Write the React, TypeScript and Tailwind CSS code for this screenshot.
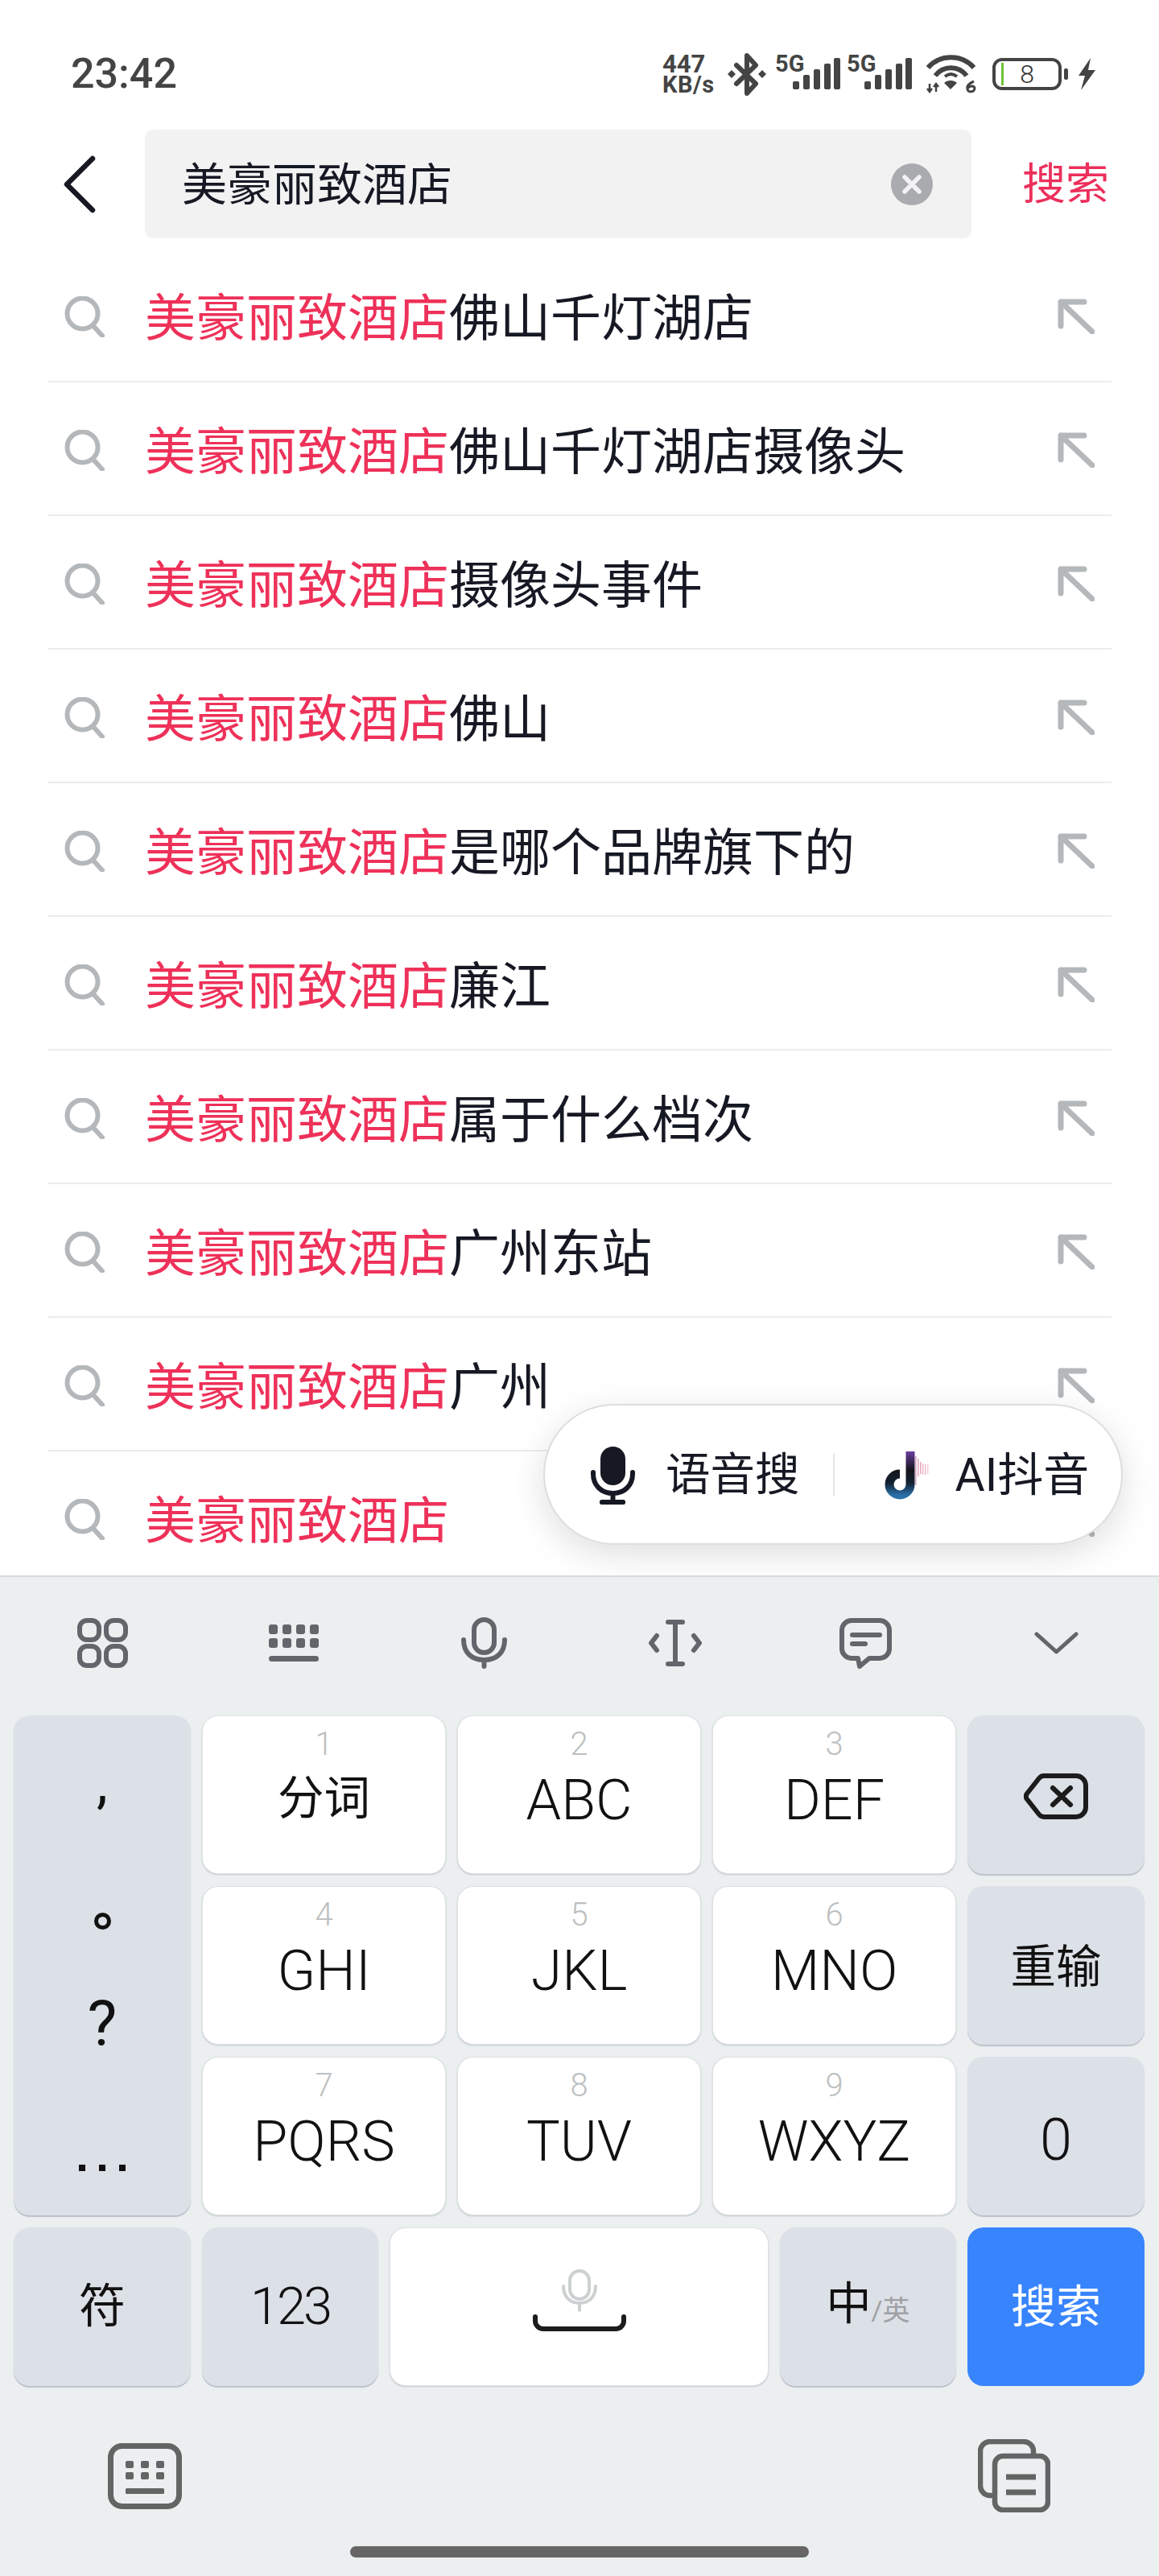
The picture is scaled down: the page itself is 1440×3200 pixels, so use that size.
import React from "react";

const rows = ["佛山千灯湖店", "佛山千灯湖店摄像头", "摄像头事件", "佛山", "是哪个品牌旗下的", "廉江", "属于什么档次", "广州东站", "广州", ""];

function SearchIcon() {
  return (
    <svg className="mt-[4px]" width="50" height="51" viewBox="0 0 50 51" fill="none" stroke="#b5b8ba" strokeWidth="6" strokeLinecap="round">
      <circle cx="22.5" cy="21.5" r="19" />
      <path d="M37 38 L47 49" />
    </svg>
  );
}

function ArrowIcon() {
  return (
    <svg width="46" height="44" viewBox="0 0 46 44" fill="none" stroke="#b5b8ba" strokeWidth="7" strokeLinecap="round" strokeLinejoin="round">
      <path d="M33 4 H4 V34 M4 4 L43 41" />
    </svg>
  );
}

function Signal() {
  return (
    <div className="relative w-[81px] h-[43px] mt-[-6px]">
      <span className="absolute left-0 top-[-5px] text-[29px] leading-[32px] font-bold text-[#444]">5G</span>
      <svg className="absolute left-[22px] top-[4px]" width="59" height="39" viewBox="0 0 59 39" fill="#444">
        <rect x="0" y="29" width="8" height="10" rx="2" />
        <rect x="13" y="21" width="8" height="18" rx="2" />
        <rect x="26" y="14" width="8" height="25" rx="2" />
        <rect x="39" y="7" width="8" height="32" rx="2" />
        <rect x="51" y="0" width="8" height="39" rx="2" />
      </svg>
    </div>
  );
}

function StatusBar() {
  return (
    <div className="flex items-center h-[161px] pt-[23px] pl-[88px] pr-[78px]">
      <span className="text-[52px] leading-[52px] font-medium text-[#444]">23:42</span>
      <div className="ml-auto flex items-center text-[#444]">
        <div className="w-[67px] flex flex-col font-bold">
          <span className="text-[31px] leading-[26px]">447</span>
          <span className="text-[29px] leading-[25px] tracking-[0.5px]">KB/s</span>
        </div>
        <svg className="ml-[14px]" width="48" height="53" viewBox="0 0 48 53" fill="none" stroke="#444" strokeWidth="6" strokeLinejoin="round" strokeLinecap="round">
          <path d="M11 15 L35 38 L24 50 V3 L35 15 L11 38" />
          <path d="M0 26 L5 21 L10 26 L5 31 Z M38 26 L43 21 L48 26 L43 31 Z" fill="#444" stroke="none" />
        </svg>
        <div className="ml-[11px]"><Signal /></div>
        <div className="ml-[8px]"><Signal /></div>
        <svg className="ml-[17px]" width="63" height="48" viewBox="0 0 63 48" fill="none" stroke="#444" strokeWidth="6">
          <path d="M3 16 C18 -1 45 -1 60 16" />
          <path d="M12 26 C22 13 41 13 51 26" />
          <path d="M24 27 C29 23 34 23 39 27" strokeWidth="4" />
          <path d="M5 36 V46 M2 42 L5 46 L8 42 M13 46 V36 M10 40 L13 36 L16 40" strokeWidth="2.5" />
          <path d="M31 43 L23 35 C27 31 35 31 39 35 Z" fill="#444" stroke="none" />
          <path d="M60 33 C53 36 51 40 52 43 C53 47 60 47 61 42 C61 38 55 38 52 42" strokeWidth="3" />
        </svg>
        <div className="ml-[20px] flex items-center">
          <div className="relative w-[86px] h-[40px] rounded-[12px] border-[4px] border-[#444] flex items-center justify-center">
            <span className="absolute left-[7px] top-[2px] w-[3px] h-[28px] bg-[#6fc23a]" />
            <span className="text-[32px] leading-none font-light text-[#333]">8</span>
          </div>
          <span className="ml-[3px] w-[5px] h-[14px] rounded-[2px] bg-[#444]" />
        </div>
        <svg className="ml-[10px]" width="25" height="40" viewBox="0 0 25 40" fill="#444">
          <path d="M18 0 L3 22 L11 22 L6 40 L24 15 L15 15 Z" />
        </svg>
      </div>
    </div>
  );
}

function Header() {
  return (
    <div className="flex items-center h-[135px]">
      <div className="w-[180px] pl-[79px] shrink-0">
        <svg width="40" height="72" viewBox="0 0 40 72" fill="none" stroke="#161823" strokeWidth="6.5" strokeLinecap="round" strokeLinejoin="round">
          <path d="M36 4 L4 36 L36 68" />
        </svg>
      </div>
      <div className="flex items-center w-[1027px] h-[135px] rounded-[10px] bg-[#f2f2f3] pl-[46px] pr-[48px]">
        <span className="pt-[3px] text-[56px] leading-none text-[#161823]">美豪丽致酒店</span>
        <svg className="ml-auto" width="52" height="52" viewBox="0 0 52 52">
          <circle cx="26" cy="26" r="26" fill="#a9abae" />
          <path d="M17 17 L35 35 M35 17 L17 35" stroke="#f2f2f3" strokeWidth="5.5" strokeLinecap="round" />
        </svg>
      </div>
      <span className="ml-[63px] pt-[3px] text-[54px] leading-none text-[#ec2f5b]">搜索</span>
    </div>
  );
}

function DouyinLogo() {
  return (
    <svg className="block" width="57" height="60" viewBox="0 0 57 60" fill="none">
      <defs>
        <linearGradient id="dy" x1="0" y1="0" x2="0" y2="1">
          <stop offset="0" stopColor="#6c3fa3" />
          <stop offset="0.42" stopColor="#15151c" />
          <stop offset="0.72" stopColor="#12202f" />
          <stop offset="1" stopColor="#2a6fa8" />
        </linearGradient>
      </defs>
      <path d="M34 0 V41 A13 13 0 1 1 21 28" stroke="url(#dy)" strokeWidth="11" />
      <rect x="40" y="6" width="1.5" height="36" fill="#b06a9c" opacity="0.6" />
      <rect x="43" y="9" width="1.5" height="22" fill="#d1567f" opacity="0.55" />
      <rect x="46" y="13" width="1.5" height="15" fill="#d1567f" opacity="0.55" />
      <rect x="49" y="15" width="1.5" height="14" fill="#d1567f" opacity="0.45" />
      <rect x="52" y="16" width="1.5" height="13" fill="#d1567f" opacity="0.4" />
      <rect x="55" y="16" width="1.5" height="12" fill="#d1567f" opacity="0.3" />
    </svg>
  );
}

function VoicePill() {
  return (
    <div className="absolute left-[675px] top-[1448px] w-[720px] h-[175px] rounded-full bg-white border-2 border-[#dedede] shadow-[0_12px_44px_rgba(0,0,0,0.13)] flex items-center pl-[57px] pt-[2px] text-[#161823]">
      <svg width="55" height="72" viewBox="0 0 55 72" fill="none">
        <rect x="12" y="0" width="31" height="48" rx="15.5" fill="#161823" />
        <path d="M3 32 V34 C3 48 13 58 27.5 58 C42 58 52 48 52 34 V32" stroke="#161823" strokeWidth="6" strokeLinecap="round" />
        <path d="M27.5 58 V68" stroke="#161823" strokeWidth="6" />
        <rect x="11" y="66" width="32" height="6" rx="2.5" fill="#161823" />
      </svg>
      <span className="ml-[38px] text-[55.5px] leading-none">语音搜</span>
      <span className="ml-[41px] w-[2px] h-[53px] bg-[#e6e6e6]" />
      <span className="ml-[60px]"><DouyinLogo /></span>
      <span className="ml-[33px] text-[57px] leading-none">AI抖音</span>
    </div>
  );
}

function SuggestionList() {
  return (
    <div className="relative flex-1 overflow-hidden">
      <div className="flex flex-col pt-[13px]">
        {rows.map((r, i) => (
          <div key={i} className="flex items-center shrink-0 h-[166px] mx-[59px] border-b-2 border-[#ececec] pl-[21px] pr-[21px]">
            <SearchIcon />
            <span className="ml-[50px] pt-[8px] text-[63px] leading-none whitespace-nowrap">
              <span className="text-[#ee3159]">美豪丽致酒店</span>
              <span className="text-[#161823]">{r}</span>
            </span>
            <span className="ml-auto mt-[4px]"><ArrowIcon /></span>
          </div>
        ))}
      </div>
      <VoicePill />
    </div>
  );
}

const tbStroke = { fill: "none", stroke: "#62666b", strokeWidth: 6, strokeLinecap: "round" as const, strokeLinejoin: "round" as const };

function Toolbar() {
  return (
    <div className="grid grid-cols-6 h-[172px] px-[9px] pb-[8px] items-center justify-items-center">
      <svg width="63" height="62" viewBox="0 0 63 62" {...tbStroke}>
        <rect x="3" y="3" width="24" height="24" rx="9" />
        <rect x="36" y="3" width="24" height="24" rx="9" />
        <rect x="3" y="35" width="24" height="24" rx="9" />
        <rect x="36" y="35" width="24" height="24" rx="9" />
      </svg>
      <svg width="62" height="47" viewBox="0 0 62 47" fill="#62666b">
        {[0, 17, 34, 51].map((x) => (
          <React.Fragment key={x}>
            <rect x={x} y="0" width="11" height="12" rx="3" />
            <rect x={x} y="17" width="11" height="12" rx="3" />
          </React.Fragment>
        ))}
        <rect x="0" y="39" width="62" height="7" rx="3.5" />
      </svg>
      <svg width="57" height="64" viewBox="0 0 57 64" {...tbStroke}>
        <rect x="16" y="3" width="25" height="41" rx="12.5" />
        <path d="M3 28 C3 44 13 53 28.5 53 C44 53 54 44 54 28 M28.5 53 V61" />
      </svg>
      <svg width="66" height="58" viewBox="0 0 66 58" {...tbStroke}>
        <path d="M24 3 H42 M24 55 H42 M33 3 V55" />
        <path d="M10 20 L3 29 L10 38 M56 20 L63 29 L56 38" />
      </svg>
      <svg width="65" height="63" viewBox="0 0 65 63" {...tbStroke}>
        <path d="M15 3 H50 A12 12 0 0 1 62 15 V38 A12 12 0 0 1 50 50 H37 L25 60 L23 50 H15 A12 12 0 0 1 3 38 V15 A12 12 0 0 1 15 3 Z" />
        <path d="M16 21 H50 M16 32 H32" />
      </svg>
      <svg width="55" height="28" viewBox="0 0 55 28" fill="none" stroke="#62666b" strokeWidth="5" strokeLinecap="round" strokeLinejoin="round">
        <path d="M3 3 L27.5 25 L52 3" />
      </svg>
    </div>
  );
}

const lightKey = "bg-white rounded-[20px] border border-[#dfe2e4] shadow-[0_1px_2px_rgba(120,125,135,0.35)]";
const grayKey = "bg-[#dce0e7] rounded-[20px] shadow-[0_2px_1px_#bcc1cc]";

function NumKey({ n, label, cjk }: { n: string; label: string; cjk?: boolean }) {
  return (
    <div className={`${lightKey} h-[197px] flex flex-col items-center pt-[15px] text-[#111]`}>
      <span className="text-[40px] leading-[40px] font-light text-[#bdbfc0]">{n}</span>
      {cjk ? (
        <span className="mt-[13px] text-[57.5px] leading-[70px]">{label}</span>
      ) : (
        <span className="mt-[14px] text-[70px] leading-[70px] font-[350]">{label}</span>
      )}
    </div>
  );
}

function Keys() {
  const keys = [
    ["1", "分词", true], ["2", "ABC"], ["3", "DEF"],
    ["4", "GHI"], ["5", "JKL"], ["6", "MNO"],
    ["7", "PQRS"], ["8", "TUV"], ["9", "WXYZ"],
  ] as [string, string, boolean?][];
  return (
    <div className="flex flex-col gap-[15px] pl-[17px] pr-[18px] text-[#111]">
      <div className="flex gap-[14px]">
        <div className={`${grayKey} w-[220px] h-[621px] shrink-0 flex flex-col items-center`}>
          <span className="mt-[60px] h-[60px] text-[70px] leading-[60px] -translate-y-[6px]">,</span>
          <span className="mt-[125px] w-[21px] h-[21px] rounded-full border-[5px] border-[#111]" aria-label="。" />
          <span className="mt-[88px] h-[60px] text-[78px] leading-[60px]">?</span>
          <span className="mt-[144px] h-[10px] flex gap-[17px]">
            <span className="w-[8px] h-[8px] bg-[#111]" />
            <span className="w-[8px] h-[8px] bg-[#111]" />
            <span className="w-[8px] h-[8px] bg-[#111]" />
          </span>
        </div>
        <div className="grid grid-cols-3 gap-x-[14px] gap-y-[15px] w-[937px] shrink-0">
          {keys.map(([n, l, c]) => (
            <NumKey key={n} n={n} label={l} cjk={c} />
          ))}
        </div>
        <div className="flex flex-col gap-[15px] w-[220px] shrink-0">
          <div className={`${grayKey} h-[197px] flex items-center justify-center`}>
            <svg className="mt-[3px]" width="80" height="57" viewBox="0 0 80 57" fill="none" stroke="#1c1c1c" strokeWidth="6" strokeLinecap="round" strokeLinejoin="round">
              <path d="M25 3 H65 A12 12 0 0 1 77 15 V42 A12 12 0 0 1 65 54 H25 A8 8 0 0 1 19 51 L4 32 A6 6 0 0 1 4 25 L19 6 A8 8 0 0 1 25 3 Z" />
              <path d="M36 18 L58 39 M58 18 L36 39" />
            </svg>
          </div>
          <div className={`${grayKey} h-[197px] flex items-center justify-center text-[56.5px] leading-none pt-[5px]`}>重输</div>
          <div className={`${grayKey} h-[197px] flex items-center justify-center text-[72px] leading-none font-[350] pt-[10px]`}>0</div>
        </div>
      </div>
      <div className="flex gap-[14px] h-[197px]">
        <div className={`${grayKey} w-[220px] flex items-center justify-center text-[58px] leading-none pb-[2px]`}>符</div>
        <div className={`${grayKey} w-[219px] flex items-center justify-center text-[65px] leading-none font-[350] tracking-[-3px]`}>123</div>
        <div className={`${lightKey} w-[471px] flex items-center justify-center`}>
          <svg className="mb-[16px]" width="116" height="77" viewBox="0 0 116 77" fill="none" strokeLinecap="round" strokeLinejoin="round">
            <g stroke="#ccd0d1" strokeWidth="4">
              <rect x="46" y="2" width="24" height="35" rx="12" />
              <path d="M38 21 C38 34 46 42 58 42 C70 42 78 34 78 21 M58 42 V51" />
            </g>
            <path d="M3 59 V64 A10 10 0 0 0 13 74 H103 A10 10 0 0 0 113 64 V59" stroke="#1c1c1c" strokeWidth="6" />
          </svg>
        </div>
        <div className={`${grayKey} w-[219px] flex items-end justify-center pb-[74px]`}>
          <span className="text-[56px] leading-[56px]">中</span>
          <span className="text-[34px] leading-[40px] text-[#9fa1a4]">/英</span>
        </div>
        <div className="w-[220px] rounded-[20px] bg-[#3884fd] flex items-center justify-center text-white text-[56px] leading-none">搜索</div>
      </div>
    </div>
  );
}

function BottomBar() {
  return (
    <div className="flex flex-col">
      <div className="flex items-center justify-between h-[91px] mt-[66px] pl-[134px] pr-[135px]">
        <svg width="92" height="82" viewBox="0 0 92 82">
          <rect x="3.5" y="3.5" width="85" height="75" rx="14" fill="none" stroke="#636565" strokeWidth="7" />
          <g fill="#636565">
            {[22, 41, 60].map((x) => (
              <React.Fragment key={x}>
                <rect x={x} y="22" width="10" height="9" rx="2" />
                <rect x={x} y="36" width="10" height="9" rx="2" />
              </React.Fragment>
            ))}
            <rect x="22" y="56" width="48" height="7" rx="1.5" />
          </g>
        </svg>
        <svg width="90" height="91" viewBox="0 0 90 91" fill="none" stroke="#636565" strokeWidth="6.5">
          <path d="M69 21 V15 A12 12 0 0 0 57 3 H15 A12 12 0 0 0 3 15 V58 A12 12 0 0 0 15 70 H21" />
          <rect x="21" y="21" width="66" height="67" rx="10" />
          <path d="M35 47 H72 M35 66 H72" strokeWidth="7" />
        </svg>
      </div>
      <div className="mt-[42px] ml-[435px] w-[570px] h-[14px] rounded-full bg-[#666]" />
    </div>
  );
}

export default function App() {
  return (
    <div lang="zh-CN" className="w-[1440px] h-[3200px] flex flex-col bg-white overflow-hidden [font-family:Roboto,'Noto_Sans_CJK_SC',sans-serif]">
      <StatusBar />
      <Header />
      <SuggestionList />
      <div className="shrink-0 h-[1243px] bg-[#ebeff0] border-t-2 border-[#d8dbdd]">
        <Toolbar />
        <Keys />
        <BottomBar />
      </div>
    </div>
  );
}
